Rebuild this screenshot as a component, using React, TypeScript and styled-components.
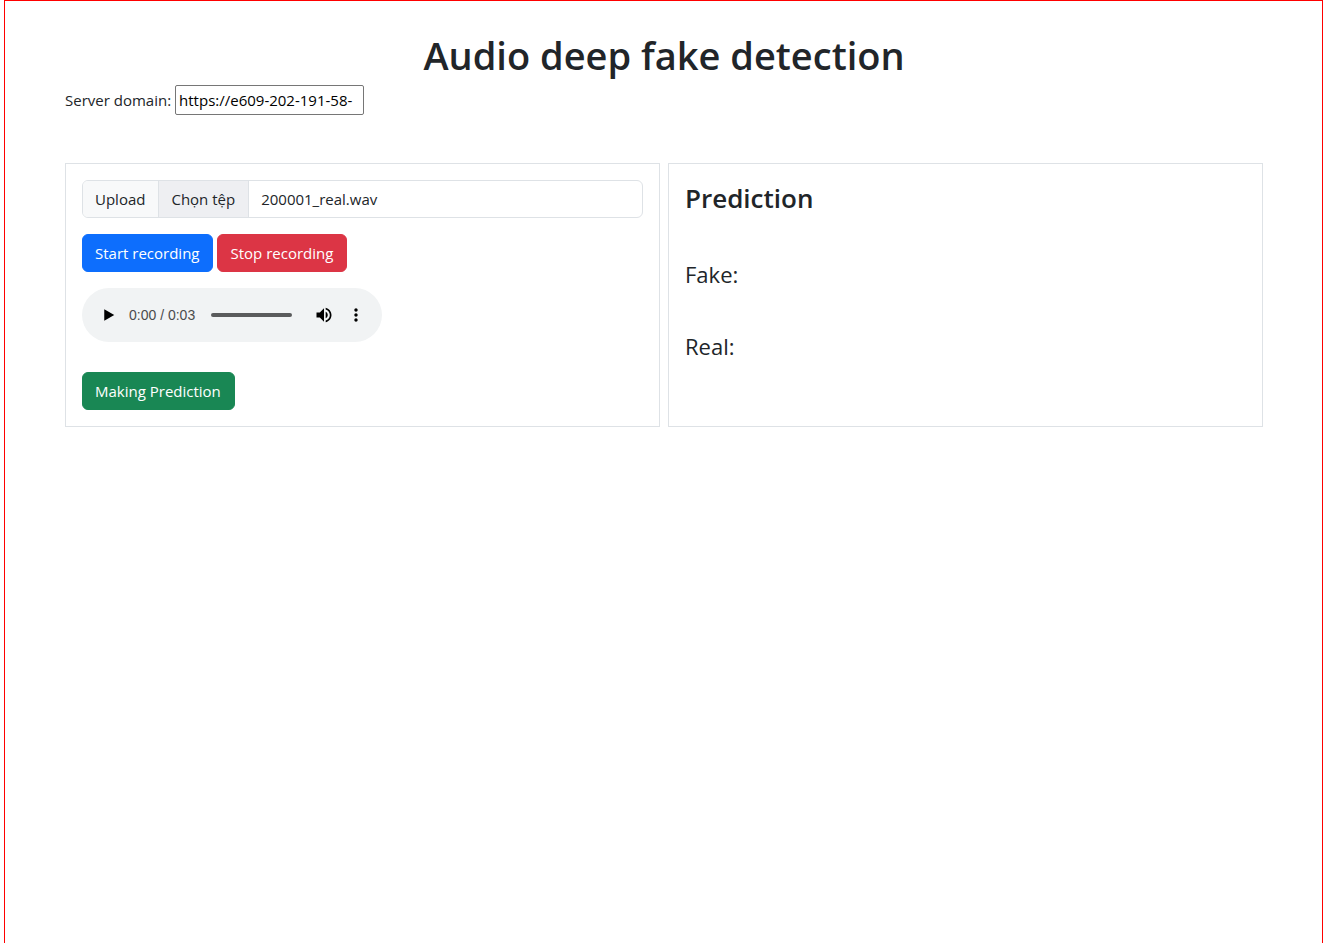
import React, { useState } from "react";
import styled, { createGlobalStyle } from "styled-components";

const GlobalStyle = createGlobalStyle`
  *, *::before, *::after { box-sizing: border-box; }
  body {
    margin: 0;
    background: #fff;
    color: #212529;
    font-family: "Segoe UI", "Open Sans", "Noto Sans", sans-serif;
    font-size: 15px;
    line-height: 24px;
  }
  button, input { font: inherit; }
`;

const Page = styled.main`
  min-height: 100vh;
  margin: 0 1px 0 4px;
  padding: 30px 59px 30px 60px;
  border: 1px solid #f00;
  border-bottom: 0;
`;

const Title = styled.h1`
  margin: 0 0 6px;
  font-size: 38px;
  font-weight: 600;
  line-height: 48px;
  text-align: center;
`;

const DomainRow = styled.div`
  display: flex;
  align-items: center;
  gap: 4px;
  margin-bottom: 48px;
`;

const DomainInput = styled.input`
  width: 189px;
  height: 30px;
  padding: 1px 3px;
  border: 1px solid #767676;
  border-radius: 2px;
  background: #fff;
  color: #000;
`;

const Panels = styled.div`
  display: grid;
  grid-template-columns: 1fr 1fr;
  gap: 8px;
`;

const Panel = styled.section`
  min-width: 0;
  padding: 16px;
  border: 1px solid #dee2e6;
`;

const UploadGroup = styled.div`
  display: flex;
  height: 38px;
  margin-bottom: 16px;
  border: 1px solid #dee2e6;
  border-radius: 6px;
  overflow: hidden;
`;

const UploadLabel = styled.label`
  padding: 6px 13px 6px 12px;
  border-right: 1px solid #dee2e6;
  background: #f8f9fa;
`;

const FileField = styled.div`
  position: relative;
  display: flex;
  flex: 1;
`;

const FileButton = styled.span`
  padding: 6px 13px 6px 12px;
  border-right: 1px solid #dee2e6;
  background: #eeeff2;
`;

const FileName = styled.span`
  padding: 6px 12px;
`;

const FileInput = styled.input`
  position: absolute;
  inset: 0;
  width: 100%;
  opacity: 0;
  cursor: pointer;
`;

const ButtonRow = styled.div`
  display: flex;
  gap: 4px;
`;

const Button = styled.button<{ $color: string }>`
  height: 38px;
  padding: 6px 13px 6px 12px;
  border: 1px solid ${(p) => p.$color};
  border-radius: 6px;
  background: ${(p) => p.$color};
  color: #fff;
  line-height: 24px;
  cursor: pointer;
`;

const Player = styled.div`
  display: flex;
  align-items: center;
  width: 300px;
  height: 54px;
  margin: 16px 0 30px;
  padding: 0 10px;
  border-radius: 27px;
  background: #f1f3f4;
`;

const PlayerButton = styled.button`
  display: flex;
  align-items: center;
  justify-content: center;
  width: 32px;
  height: 32px;
  padding: 0;
  border: 0;
  background: none;
  color: #000;
`;

const Time = styled.span`
  margin: 0 16px 0 5px;
  color: #4b4c4d;
  font-family: "Liberation Sans", Arial, sans-serif;
  font-size: 14px;
  white-space: nowrap;
`;

const Seek = styled.input`
  appearance: none;
  flex: 1;
  min-width: 0;
  height: 4px;
  margin: 0 16px 0 0;
  border-radius: 2px;
  background: #5a5b5c;
  &::-webkit-slider-thumb {
    appearance: none;
    width: 0;
    height: 0;
  }
`;

const PanelTitle = styled.h2`
  margin: 0 0 40px;
  font-size: 26px;
  font-weight: 600;
  line-height: 36px;
`;

const Result = styled.p`
  margin: 0 0 36px;
  font-size: 22px;
  line-height: 36px;
`;

export default function App() {
  const [domain, setDomain] = useState("https://e609-202-191-58-");
  const [file, setFile] = useState("200001_real.wav");
  const [position, setPosition] = useState(0);

  return (
    <>
      <GlobalStyle />
      <Page>
        <Title>Audio deep fake detection</Title>
        <DomainRow>
          <label htmlFor="domain">Server domain:</label>
          <DomainInput id="domain" type="text" value={domain} onChange={(e) => setDomain(e.target.value)} />
        </DomainRow>
        <Panels>
          <Panel>
            <UploadGroup>
              <UploadLabel htmlFor="audio-file">Upload</UploadLabel>
              <FileField>
                <FileButton>Chọn tệp</FileButton>
                <FileName>{file}</FileName>
                <FileInput
                  id="audio-file"
                  type="file"
                  accept="audio/*"
                  onChange={(e) => setFile(e.target.files?.[0]?.name ?? file)}
                />
              </FileField>
            </UploadGroup>
            <ButtonRow>
              <Button type="button" $color="#0d6efd">Start recording</Button>
              <Button type="button" $color="#dc3545">Stop recording</Button>
            </ButtonRow>
            <Player>
              <PlayerButton type="button" aria-label="Play">
                <svg width="20" height="20" viewBox="0 0 24 24" fill="currentColor">
                  <path d="M7.5 5v14l12-7z" />
                </svg>
              </PlayerButton>
              <Time>0:00 / 0:03</Time>
              <Seek
                type="range"
                aria-label="Seek"
                min={0}
                max={3}
                value={position}
                onChange={(e) => setPosition(Number(e.target.value))}
              />
              <PlayerButton type="button" aria-label="Mute">
                <svg width="20" height="20" viewBox="0 0 24 24" fill="currentColor">
                  <path d="M3 9v6h4l5 5V4L7 9H3zm13.5 3c0-1.77-1.02-3.29-2.5-4.03v8.05c1.48-.73 2.5-2.25 2.5-4.02zM14 3.23v2.06c2.89.86 5 3.54 5 6.71s-2.11 5.85-5 6.71v2.06c4.01-.91 7-4.49 7-8.77s-2.99-7.86-7-8.77z" />
                </svg>
              </PlayerButton>
              <PlayerButton type="button" aria-label="More options">
                <svg width="20" height="20" viewBox="0 0 24 24" fill="currentColor">
                  <path d="M12 8c1.1 0 2-.9 2-2s-.9-2-2-2-2 .9-2 2 .9 2 2 2zm0 2c-1.1 0-2 .9-2 2s.9 2 2 2 2-.9 2-2-.9-2-2-2zm0 6c-1.1 0-2 .9-2 2s.9 2 2 2 2-.9 2-2-.9-2-2-2z" />
                </svg>
              </PlayerButton>
            </Player>
            <Button type="button" $color="#198754">Making Prediction</Button>
          </Panel>
          <Panel>
            <PanelTitle>Prediction</PanelTitle>
            <Result>Fake:</Result>
            <Result>Real:</Result>
          </Panel>
        </Panels>
      </Page>
    </>
  );
}
